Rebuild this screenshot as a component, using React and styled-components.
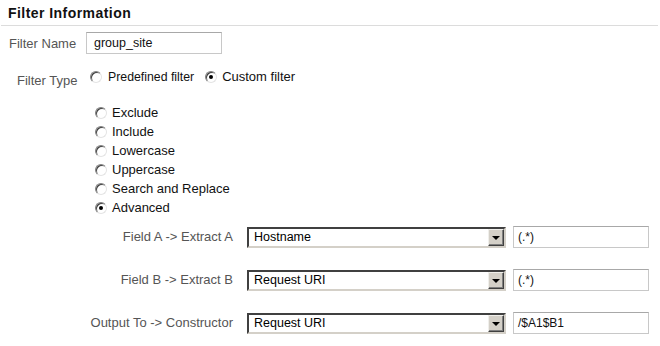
import React from "react";
import styled, { createGlobalStyle } from "styled-components";

const Global = createGlobalStyle`
  html, body { margin: 0; padding: 0; background: #fff; }
  body { font-family: "Liberation Sans", Arial, sans-serif; font-size: 13px; color: #000; }
`;

const Page = styled.div`
  width: 660px;
  height: 346px;
  overflow: hidden;
`;

const Title = styled.h2`
  margin: 0 2px 0 1px;
  padding: 3px 7px 0;
  height: 22px;
  font-size: 14px;
  line-height: 20px;
  font-weight: bold;
  letter-spacing: 0.45px;
  color: #111;
  border-bottom: 1px solid #dcdcdc;
`;

const Row = styled.div`
  display: flex;
  align-items: center;
  padding-left: ${(p) => p.$indent || 0}px;
  margin-top: ${(p) => p.$top || 0}px;
`;

const Label = styled.span`
  color: #555;
  font-size: 13px;
  width: ${(p) => p.$w}px;
  text-align: ${(p) => (p.$right ? "right" : "left")};
  flex: none;
  margin-top: ${(p) => p.$dy || 0}px;
`;

const TextBox = styled.div`
  box-sizing: border-box;
  width: ${(p) => p.$w}px;
  height: ${(p) => p.$h || 22}px;
  border: 1px solid #c8c8c8;
  border-top-color: #a8a8a8;
  padding: 0 0 0 ${(p) => p.$pl || 7}px;
  display: flex;
  align-items: center;
  font-size: ${(p) => p.$fs || 12.5}px;
  color: #111;
  background: #fff;
  margin-left: ${(p) => p.$ml || 0}px;
`;

const RadioGroup = styled.div`
  display: flex;
  align-items: center;
`;

const Option = styled.label`
  display: flex;
  align-items: center;
  height: 19px;
  margin-right: ${(p) => p.$mr || 0}px;
  color: #111;
  font-size: ${(p) => p.$fs || 13}px;
`;

const Circle = styled.span`
  box-sizing: border-box;
  width: 12px;
  height: 12px;
  border-radius: 50%;
  border: 1px solid;
  border-color: #808080 #e4e4e4 #e4e4e4 #808080;
  background: #fff;
  box-shadow: inset 1px 1px 0 #404040;
  display: inline-flex;
  align-items: center;
  justify-content: center;
  margin-right: ${(p) => p.$gap || 6}px;
  flex: none;
  &::after {
    content: "";
    width: 4px;
    height: 4px;
    border-radius: 50%;
    background: ${(p) => (p.$on ? "#000" : "transparent")};
  }
`;

const List = styled.div`
  display: flex;
  flex-direction: column;
  padding-left: 95px;
  margin-top: 15px;
`;

const Select = styled.div`
  box-sizing: border-box;
  width: 259px;
  height: 21px;
  display: flex;
  align-items: stretch;
  border: 2px solid;
  border-color: #404040 #d4d0c8 #d4d0c8 #404040;
  background: #fff;
  margin-left: 14px;
`;

const SelectText = styled.span`
  flex: 1;
  display: flex;
  align-items: center;
  padding-left: 5px;
  font-size: 12.5px;
  color: #000;
`;

const Arrow = styled.span`
  box-sizing: border-box;
  width: 16px;
  display: flex;
  align-items: center;
  justify-content: center;
  background: #d4d0c8;
  border: 1px solid;
  border-color: #f0efeb #404040 #404040 #f0efeb;
  box-shadow: inset -1px -1px 0 #808080;
  &::after {
    content: "";
    border-left: 4px solid transparent;
    border-right: 4px solid transparent;
    border-top: 4px solid #000;
    margin-top: 1px;
  }
`;

const options = [
  ["Exclude", false],
  ["Include", false],
  ["Lowercase", false],
  ["Uppercase", false],
  ["Search and Replace", false],
  ["Advanced", true],
];

const fields = [
  ["Field A -> Extract A", "Hostname", "(.*)"],
  ["Field B -> Extract B", "Request URI", "(.*)"],
  ["Output To -> Constructor", "Request URI", "/$A1$B1"],
];

export default function App() {
  return (
    <Page>
      <Global />
      <Title>Filter Information</Title>
      <Row $indent={9} $top={6}>
        <Label $w={77}>Filter Name</Label>
        <TextBox $w={136}>group_site</TextBox>
      </Row>
      <Row $indent={17} $top={11}>
        <Label $w={73} $dy={8}>Filter Type</Label>
        <RadioGroup>
          <Option $mr={11} $fs={12.3}>
            <Circle $gap={6} />
            Predefined filter
          </Option>
          <Option>
            <Circle $gap={5} $on />
            Custom filter
          </Option>
        </RadioGroup>
      </Row>
      <List>
        {options.map(([t, on]) => (
          <Option key={t}>
            <Circle $on={on} $gap={5} />
            {t}
          </Option>
        ))}
      </List>
      {fields.map(([label, sel, val], i) => (
        <Row key={label} $top={i === 0 ? 9 : 21}>
          <Label $w={233} $right $dy={-1}>{label}</Label>
          <Select>
            <SelectText>{sel}</SelectText>
            <Arrow />
          </Select>
          <TextBox $w={136} $h={22} $ml={7} $pl={4} $fs={12}>{val}</TextBox>
        </Row>
      ))}
    </Page>
  );
}
